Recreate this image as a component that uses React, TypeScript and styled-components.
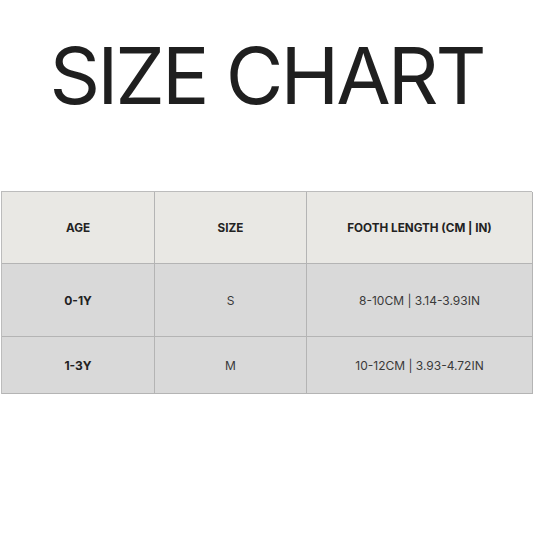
import React from "react";
import styled, { createGlobalStyle } from "styled-components";

const Global = createGlobalStyle`
  html, body { margin: 0; padding: 0; background: #ffffff; }
  body { width: 533px; height: 533px; overflow: hidden; }
`;

const Page = styled.div`
  width: 533px;
  height: 533px;
  display: flex;
  flex-direction: column;
  align-items: center;
  font-family: Inter, "Liberation Sans", sans-serif;
`;

const Title = styled.h1`
  margin: 30px 0 0 0;
  height: 90px;
  font-family: Inter, "Liberation Sans", sans-serif;
  font-weight: 400;
  font-size: 79px;
  line-height: 90px;
  letter-spacing: -3px;
  color: #1f1f1f;
  white-space: nowrap;
`;

const Table = styled.div`
  margin-top: 71px;
  margin-left: 1px;
  align-self: flex-start;
  width: 531px;
  display: grid;
  grid-template-columns: 153px 152px 226px;
  grid-template-rows: 72px 73px 57px;
  border-top: 1px solid #bcbcbc;
  border-left: 1px solid #bcbcbc;
  box-sizing: border-box;
`;

const Cell = styled.div<{ $head?: boolean; $bold?: boolean }>`
  display: flex;
  align-items: center;
  justify-content: center;
  border-right: 1px solid #b4b4b4;
  border-bottom: 1px solid #b4b4b4;
  background: ${(p) => (p.$head ? "#e9e8e4" : "#d9d9d9")};
  color: ${(p) => (p.$head || p.$bold ? "#222222" : "#3a3a3a")};
  font-size: ${(p) => (p.$head ? "11.7px" : "12px")};
  font-weight: ${(p) => (p.$head || p.$bold ? 700 : 400)};
  white-space: nowrap;
`;

const rows = [
  ["0-1Y", "S", "8-10CM | 3.14-3.93IN"],
  ["1-3Y", "M", "10-12CM | 3.93-4.72IN"],
];

export default function App() {
  return (
    <Page>
      <Global />
      <Title>SIZE CHART</Title>
      <Table>
        <Cell $head>AGE</Cell>
        <Cell $head>SIZE</Cell>
        <Cell $head>FOOTH LENGTH (CM | IN)</Cell>
        {rows.map((r) => (
          <React.Fragment key={r[0]}>
            <Cell $bold>{r[0]}</Cell>
            <Cell>{r[1]}</Cell>
            <Cell>{r[2]}</Cell>
          </React.Fragment>
        ))}
      </Table>
    </Page>
  );
}
